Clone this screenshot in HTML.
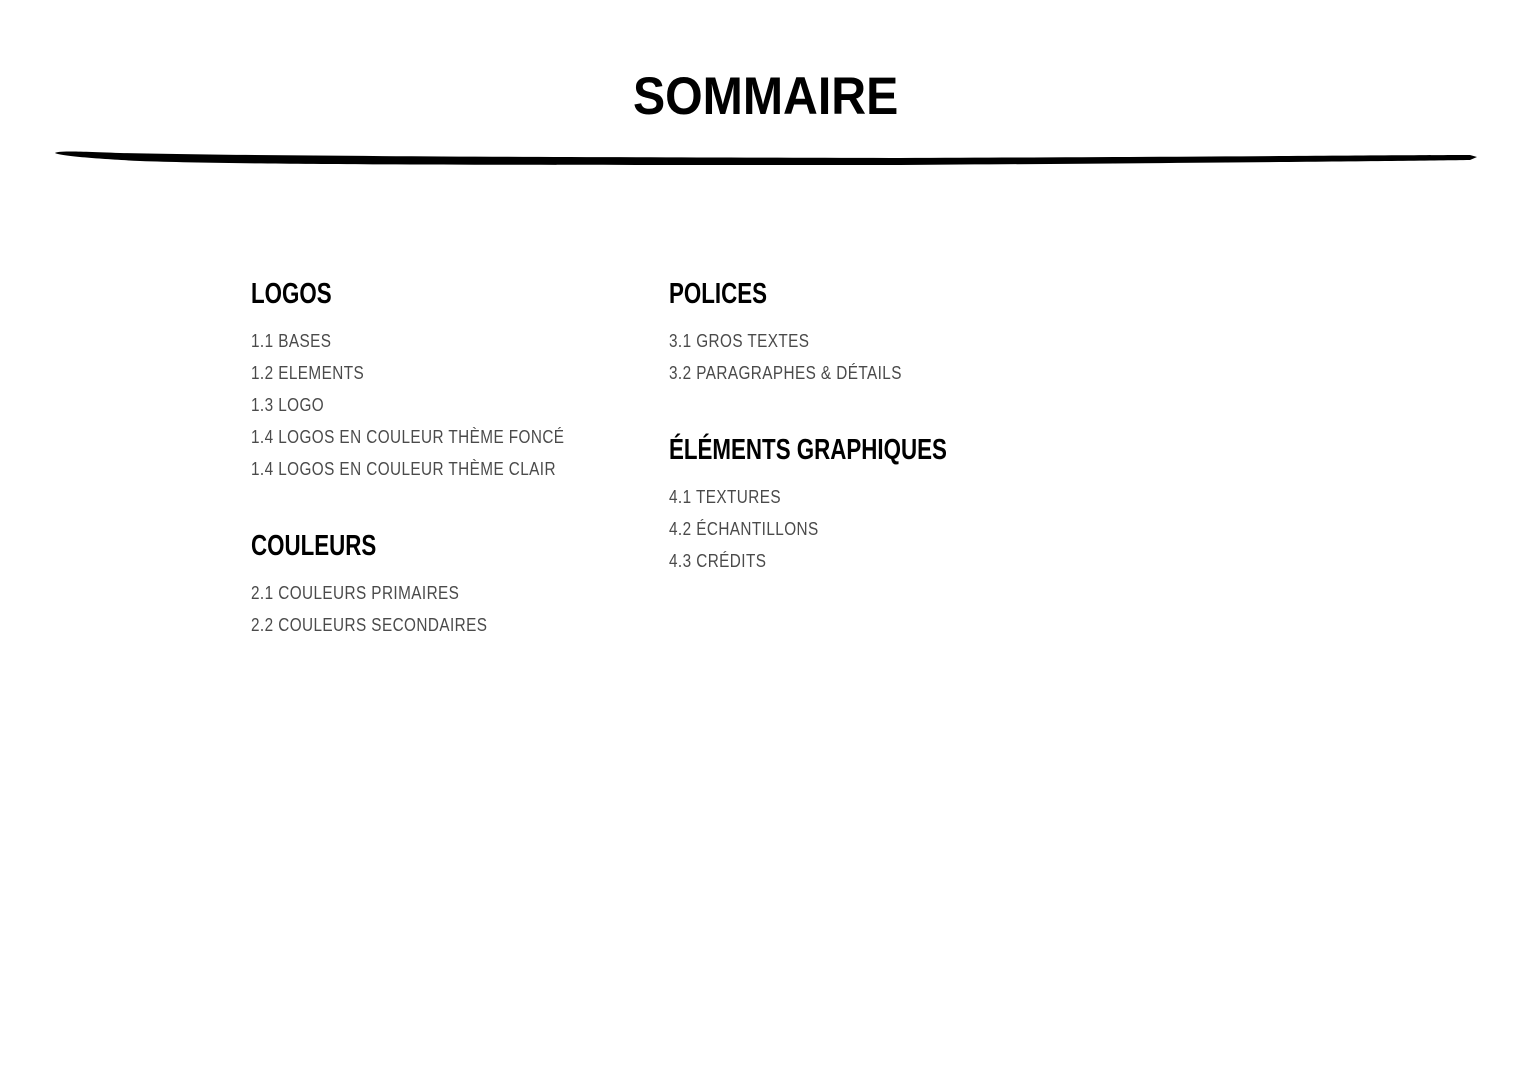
<!DOCTYPE html>
<html><head><meta charset="utf-8"><style>
body{margin:0;width:1533px;height:1080px;background:#fff;position:relative;overflow:hidden;font-family:"Liberation Sans",sans-serif;}
.t{position:absolute;line-height:1;white-space:nowrap;transform-origin:left top;}
.title{font-size:53px;font-weight:bold;color:#000;left:633px;top:70px;transform:scaleX(0.91);letter-spacing:0px}
.h{font-size:29px;font-weight:bold;color:#000;transform:scaleX(0.77)}
.i{font-size:18px;color:#4a4a4a;transform:scaleX(0.85);letter-spacing:0.5px}
</style></head><body>
<div class="t title">SOMMAIRE</div>
<svg style="position:absolute;left:0;top:0" width="1533" height="200">
<path d="M55 153 C 58 151, 70 151, 120 153 C 250 156, 500 157, 900 158 C 1200 157, 1400 155, 1470 155 L1477 157 L1470 160 C 1400 161, 1200 163, 900 165 C 500 165, 250 165, 140 161 C 100 159, 60 156, 55 153 Z" fill="#000"/>
</svg>
<div class="t h" style="left:251px;top:280px">LOGOS</div>
<div class="t i" style="left:251px;top:332px">1.1 BASES</div>
<div class="t i" style="left:251px;top:364px">1.2 ELEMENTS</div>
<div class="t i" style="left:251px;top:396px">1.3 LOGO</div>
<div class="t i" style="left:251px;top:428px">1.4 LOGOS EN COULEUR THÈME FONCÉ</div>
<div class="t i" style="left:251px;top:460px">1.4 LOGOS EN COULEUR THÈME CLAIR</div>
<div class="t h" style="left:251px;top:532px">COULEURS</div>
<div class="t i" style="left:251px;top:584px">2.1 COULEURS PRIMAIRES</div>
<div class="t i" style="left:251px;top:616px">2.2 COULEURS SECONDAIRES</div>
<div class="t h" style="left:669px;top:280px">POLICES</div>
<div class="t i" style="left:669px;top:332px">3.1 GROS TEXTES</div>
<div class="t i" style="left:669px;top:364px">3.2 PARAGRAPHES &amp; DÉTAILS</div>
<div class="t h" style="left:669px;top:436px">ÉLÉMENTS GRAPHIQUES</div>
<div class="t i" style="left:669px;top:488px">4.1 TEXTURES</div>
<div class="t i" style="left:669px;top:520px">4.2 ÉCHANTILLONS</div>
<div class="t i" style="left:669px;top:552px">4.3 CRÉDITS</div>
</body></html>
